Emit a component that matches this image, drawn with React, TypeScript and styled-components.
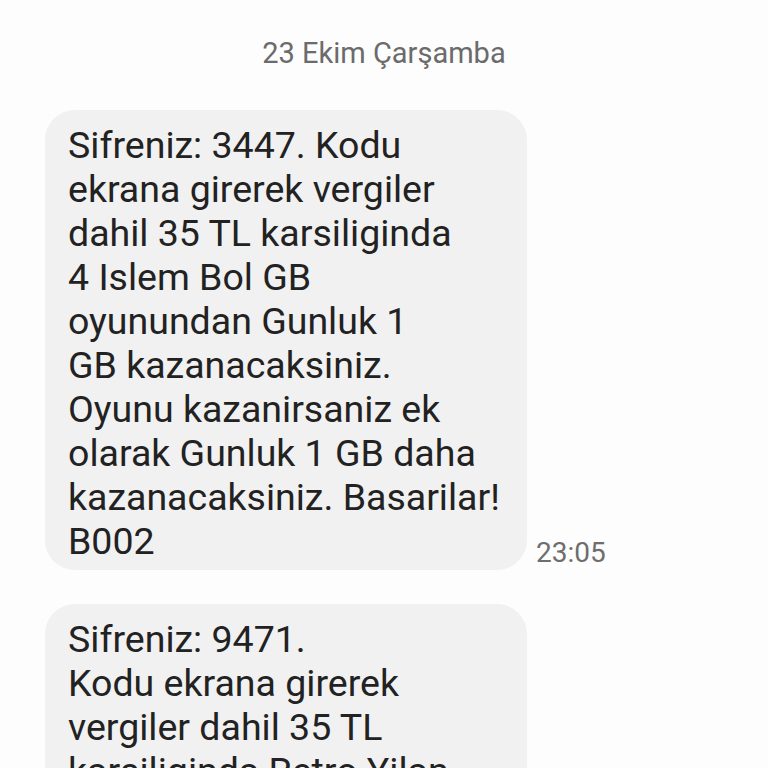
import styled, { createGlobalStyle } from 'styled-components';

const GlobalStyle = createGlobalStyle`
  html, body {
    margin: 0;
    padding: 0;
    background: #fdfdfd;
    overflow: hidden;
  }
`;

const Screen = styled.div`
  width: 768px;
  height: 768px;
  overflow: hidden;
  background: #fdfdfd;
  font-family: Roboto, 'Noto Sans', sans-serif;
  display: flex;
  flex-direction: column;
`;

const DateHeader = styled.div`
  text-align: center;
  font-size: 29px;
  line-height: 34px;
  color: #6b6b6b;
  padding-top: 36px;
`;

const Thread = styled.div`
  display: flex;
  flex-direction: column;
  gap: 34px;
  padding: 40px 0 0 45px;
`;

const Row = styled.div`
  display: flex;
  align-items: flex-end;
  gap: 9px;
`;

const Bubble = styled.div`
  width: 482px;
  flex-shrink: 0;
  box-sizing: border-box;
  background: #f1f1f1;
  border-radius: 30px;
  padding: 13px 16px 7px 23px;
  font-size: 37.5px;
  line-height: 44px;
  color: #222;
  white-space: nowrap;
`;

const Time = styled.span`
  font-size: 28px;
  line-height: 28px;
  color: #6e6e6e;
  padding-bottom: 3px;
`;

const messages = [
  {
    lines: [
      'Sifreniz: 3447. Kodu',
      'ekrana girerek vergiler',
      'dahil 35 TL karsiliginda',
      '4 Islem Bol GB',
      'oyunundan Gunluk 1',
      'GB kazanacaksiniz.',
      'Oyunu kazanirsaniz ek',
      'olarak Gunluk 1 GB daha',
      'kazanacaksiniz. Basarilar!',
      'B002',
    ],
    time: '23:05',
  },
  {
    lines: [
      'Sifreniz: 9471.',
      'Kodu ekrana girerek',
      'vergiler dahil 35 TL',
      'karsiliginda Retro Yilan',
      'oyunundan Gunluk 1',
      'GB kazanacaksiniz.',
    ],
    time: '23:06',
  },
];

export default function App() {
  return (
    <Screen>
      <GlobalStyle />
      <DateHeader>23 Ekim Çarşamba</DateHeader>
      <Thread>
        {messages.map((m, i) => (
          <Row key={i}>
            <Bubble>
              {m.lines.map((l, j) => (
                <div key={j}>{l}</div>
              ))}
            </Bubble>
            <Time>{m.time}</Time>
          </Row>
        ))}
      </Thread>
    </Screen>
  );
}
